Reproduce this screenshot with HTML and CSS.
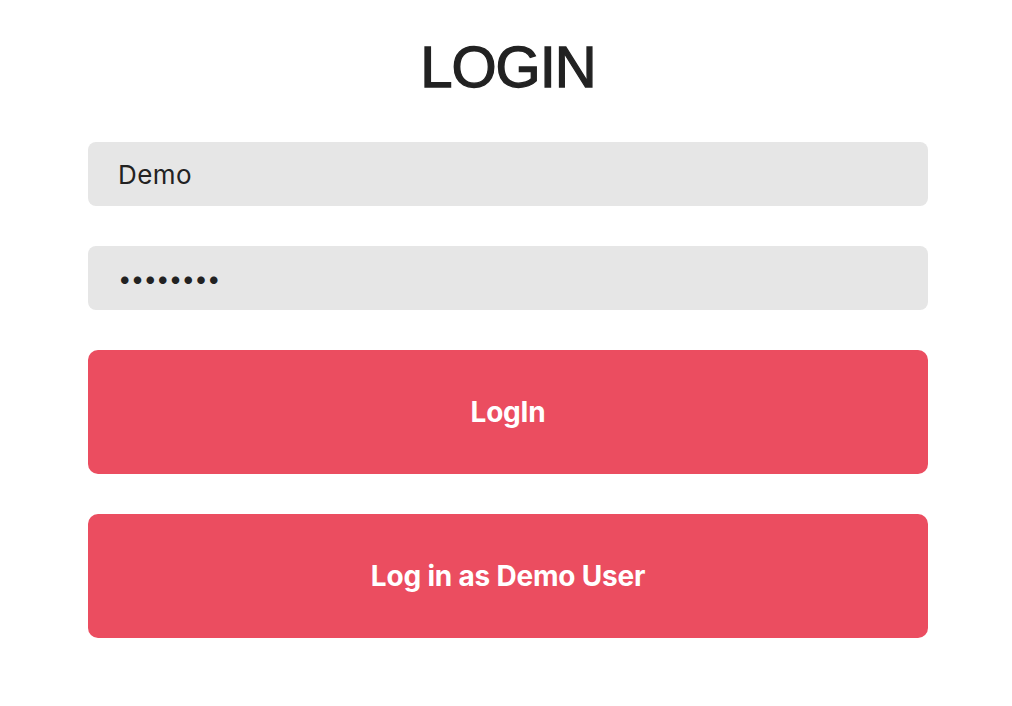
FILE: index.html
```html
<!DOCTYPE html>
<html>
<head>
<meta charset="utf-8">
<link rel="stylesheet" href="styles.css">
</head>
<body>
<div class="page">
  <h1 class="title">LOGIN</h1>
  <form class="form">
    <input class="field" type="text" value="Demo">
    <input class="field password" type="password" value="password">
    <button class="btn" type="button">LogIn</button>
    <button class="btn" type="button">Log in as Demo User</button>
  </form>
</div>
</body>
</html>
```
FILE: styles.css
```css
html, body {
  margin: 0;
  padding: 0;
  background: #ffffff;
}
.page {
  width: 840px;
  margin-left: 88px;
  padding-top: 30px;
  display: flex;
  flex-direction: column;
}
.title {
  margin: 0 0 40px 0;
  height: 72px;
  line-height: 74px;
  text-align: center;
  font-family: "Liberation Sans", Arial, sans-serif;
  font-weight: 400;
  font-size: 58px;
  letter-spacing: -1px;
  color: #222222;
  -webkit-text-stroke: 1.3px #222222;
}
.form {
  display: flex;
  flex-direction: column;
  gap: 40px;
}
.field {
  box-sizing: border-box;
  height: 64px;
  width: 100%;
  border: none;
  border-radius: 8px;
  background: #e6e6e6;
  padding: 0 30px;
  font-family: Inter, "Noto Sans", sans-serif;
  font-size: 26px;
  letter-spacing: 0.4px;
  color: #222222;
  outline: none;
}
.password {
  font-size: 24px;
  letter-spacing: -0.8px;
}
.btn {
  height: 124px;
  width: 100%;
  border: none;
  border-radius: 10px;
  background: #eb4d60;
  color: #ffffff;
  font-family: Inter, "Noto Sans", sans-serif;
  font-weight: 700;
  font-size: 28px;
  letter-spacing: -0.2px;
  padding: 0;
}
```
